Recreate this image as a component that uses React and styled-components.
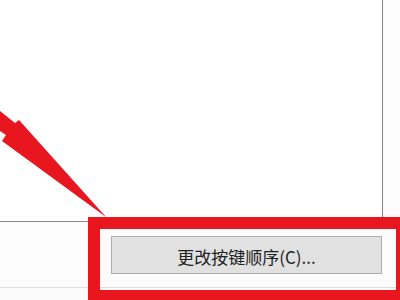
import React from "react";
import styled, { createGlobalStyle } from "styled-components";

const Global = createGlobalStyle`
  html, body { margin: 0; padding: 0; background: #fcfcfc; }
  body { font-family: "Microsoft YaHei", "Noto Sans CJK SC", "Liberation Sans", sans-serif; }
`;

const Dialog = styled.div`
  position: relative;
  width: 400px;
  height: 300px;
  overflow: hidden;
  background: #fcfcfc;
  display: flex;
  flex-direction: column;
`;

const ListPanel = styled.div`
  width: 382px;
  height: 221px;
  flex: none;
  background: #ffffff;
  border-right: 1px solid #808080;
  border-bottom: 1px solid #8a8a8a;
`;

const ButtonRow = styled.div`
  display: flex;
  padding: 14px 0 0 111px;
  height: 38px;
  flex: none;
`;

const OrderButton = styled.button`
  box-sizing: border-box;
  width: 271px;
  height: 38px;
  margin: 0;
  padding: 2px 0 0;
  background: #e1e1e1;
  border: 1px solid #adadad;
  color: #222222;
  font-family: "Noto Sans CJK SC", "Liberation Sans", sans-serif;
  font-size: 17px;
  line-height: 1;
  display: flex;
  align-items: center;
  justify-content: center;
`;

const Separator = styled.div`
  margin-top: 13px;
  height: 0;
  border-top: 1px solid #dedede;
  flex: none;
`;

const Footer = styled.div`
  flex: 1;
  background: #fbfbfb;
`;

const Highlight = styled.div`
  position: absolute;
  left: 88px;
  top: 217px;
  width: 320px;
  height: 85px;
  box-sizing: border-box;
  border: 12px solid #e8161e;
  pointer-events: none;
`;

const ArrowLayer = styled.svg`
  position: absolute;
  left: 0;
  top: 0;
  pointer-events: none;
`;

export default function App() {
  return (
    <>
      <Global />
      <Dialog>
        <ListPanel />
        <ButtonRow>
          <OrderButton>更改按键顺序(C)...</OrderButton>
        </ButtonRow>
        <Separator />
        <Footer />
        <ArrowLayer width="400" height="300" viewBox="0 0 400 300">
          <polygon
            points="0,111 15,123 19,120 106,217 2,141 6,135 0,131"
            fill="#e8161e"
          />
        </ArrowLayer>
        <Highlight />
      </Dialog>
    </>
  );
}
